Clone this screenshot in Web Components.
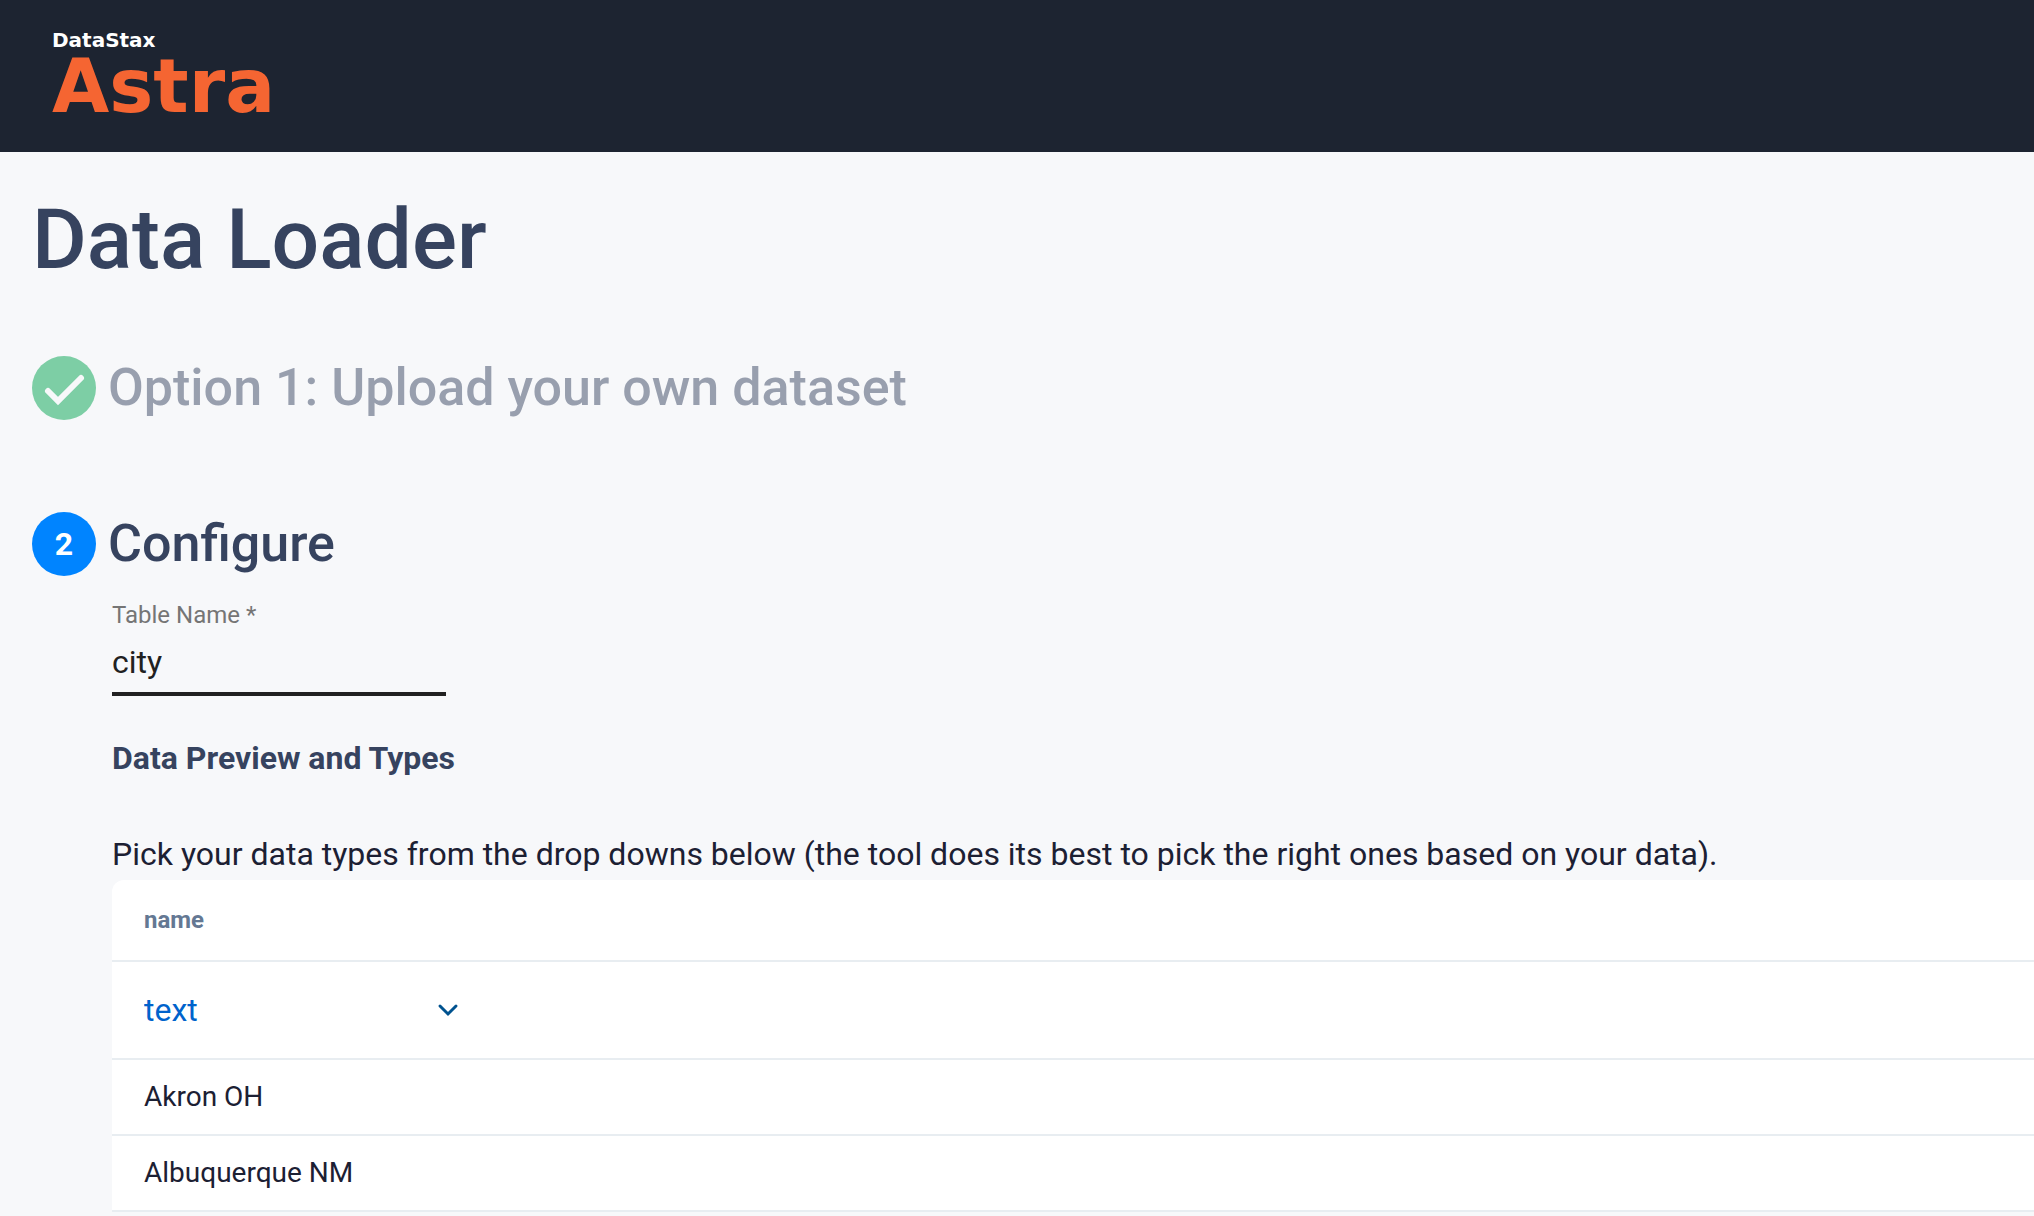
<!DOCTYPE html>
<html lang="en">
<head>
<meta charset="utf-8">
<title>DataStax Astra - Data Loader</title>
<style>
  html { background: #f7f8fa; }
  body { margin: 0; font-family: Roboto, sans-serif; font-size: 32px; line-height: 48px; color: #1c2033; }
</style>
</head>
<body>
<data-loader-page>
  <astra-header slot="header"></astra-header>
  <loader-step state="done" heading="Option 1: Upload your own dataset"></loader-step>
  <loader-step state="active" number="2" heading="Configure">
    <text-field label="Table Name *" value="city"></text-field>
    <data-preview heading="Data Preview and Types" column="name" type="text" rows="Akron OH|Albuquerque NM">Pick your data types from the drop downs below (the tool does its best to pick the right ones based on your data).</data-preview>
  </loader-step>
</data-loader-page>
<script>
class Base extends HTMLElement {
  connectedCallback() {
    if (!this.shadowRoot) this.attachShadow({ mode: 'open' }).innerHTML = this.view();
  }
  attr(name) { return this.getAttribute(name) || ''; }
}

customElements.define('astra-header', class extends Base {
  view() {
    return `<style>
      :host { display: flex; align-items: flex-start; height: 152px; padding: 28px 52px 0; box-sizing: border-box; background: #1d2431; font-family: "DejaVu Sans", sans-serif; font-weight: 700; }
      a { display: flex; flex-direction: column; text-decoration: none; }
      .company { font-size: 20px; line-height: 24px; color: #fff; }
      .product { font-size: 74px; line-height: 68px; color: #f56532; }
    </style>
    <a href="#"><span class="company">DataStax</span><span class="product">Astra</span></a>`;
  }
});

customElements.define('data-loader-page', class extends Base {
  view() {
    return `<style>
      :host { display: block; }
      main { display: flex; flex-direction: column; padding: 38px 0 0 32px; }
      h1 { margin: 0 0 66px; font-size: 84px; line-height: 100px; font-weight: 500; color: #36435f; }
      .steps { display: flex; flex-direction: column; gap: 92px; }
    </style>
    <slot name="header"></slot>
    <main><h1>Data Loader</h1><div class="steps"><slot></slot></div></main>`;
  }
});

customElements.define('loader-step', class extends Base {
  view() {
    const done = this.attr('state') === 'done';
    const mark = done
      ? '<svg viewBox="0 0 64 64" aria-hidden="true"><path d="M16 35 26 45 49 22" fill="none" stroke="#f7f8fa" stroke-width="6" stroke-linecap="round"/></svg>'
      : this.attr('number');
    return `<style>
      :host { display: block; }
      header { display: flex; align-items: center; gap: 12px; }
      .badge { display: flex; align-items: center; justify-content: center; width: 64px; height: 64px; border-radius: 50%; background: #0084ff; color: #fff; font-weight: 700; line-height: 46px; }
      svg { width: 64px; height: 64px; }
      h2 { margin: 0; font-size: 52px; line-height: 64px; font-weight: 500; color: #36435f; }
      .done .badge { background: #7dcea5; }
      .done h2 { color: #989fae; }
      .body { padding-left: 80px; }
    </style>
    <section class="${done ? 'done' : 'active'}">
      <header><span class="badge">${mark}</span><h2>${this.attr('heading')}</h2></header>
      <div class="body"><slot></slot></div>
    </section>`;
  }
});

customElements.define('text-field', class extends Base {
  view() {
    return `<style>
      :host { display: flex; flex-direction: column; gap: 2px; width: 334px; padding-top: 24px; }
      label { font-size: 24px; line-height: 30px; color: #757575; }
      input { box-sizing: border-box; width: 100%; height: 64px; margin: 0; padding: 0; border: 0; border-bottom: 4px solid #212121; background: none; font: inherit; color: #212121; outline: 0; }
    </style>
    <label for="field">${this.attr('label')}</label>
    <input id="field" type="text" value="${this.attr('value')}" required>`;
  }
});

customElements.define('type-select', class extends Base {
  view() {
    return `<style>
      :host { display: grid; width: 320px; align-items: center; }
      select, svg { grid-area: 1 / 1; }
      select { appearance: none; width: 100%; height: 64px; margin: 0; padding: 0; border: 0; background: none; font: inherit; color: #0063cc; outline: 0; }
      svg { justify-self: end; width: 32px; height: 32px; pointer-events: none; }
    </style>
    <select aria-label="${this.attr('label')}"><option>${this.attr('value')}</option></select>
    <svg viewBox="0 0 32 32" aria-hidden="true"><path d="M8 12 16 20 24 12" fill="none" stroke="#00528f" stroke-width="3" stroke-linecap="round"/></svg>`;
  }
});

customElements.define('data-preview', class extends Base {
  view() {
    const rows = this.attr('rows').split('|').map(r => `<tr><td>${r}</td></tr>`).join('');
    return `<style>
      :host { display: block; padding-top: 38px; }
      h3 { margin: 0 0 48px; font-size: inherit; line-height: inherit; font-weight: 700; color: #36435f; }
      p { margin: 0 0 2px; }
      .frame { background: #e8edf1; border-radius: 12px 0 0 0; overflow: hidden; }
      table { width: 100%; border-collapse: separate; border-spacing: 0; background: #fff; }
      th, td { height: 74px; padding: 0 32px; border-bottom: 2px solid #e8edf1; text-align: left; font-size: 28px; line-height: 40px; }
      th { height: 80px; font-size: 24px; font-weight: 700; color: #647893; }
      .types td { height: 96px; font-size: 32px; }
    </style>
    <h3>${this.attr('heading')}</h3>
    <p><slot></slot></p>
    <div class="frame"><table>
      <thead><tr><th scope="col">${this.attr('column')}</th></tr></thead>
      <tbody><tr class="types"><td><type-select label="Type of ${this.attr('column')}" value="${this.attr('type')}"></type-select></td></tr>${rows}</tbody>
    </table></div>`;
  }
});
</script>
</body>
</html>
